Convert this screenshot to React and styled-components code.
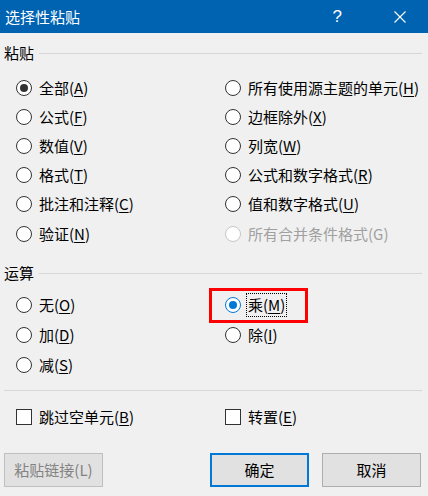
import React from "react";
import styled, { createGlobalStyle } from "styled-components";

const GlobalStyle = createGlobalStyle`
  body {
    margin: 0;
    background: #f0f0f0;
    font-family: "Noto Sans CJK SC", "Noto Sans", sans-serif;
  }
`;

const pasteOptions = [
  { label: "全部", key: "A", checked: true },
  { label: "所有使用源主题的单元", key: "H" },
  { label: "公式", key: "F" },
  { label: "边框除外", key: "X" },
  { label: "数值", key: "V" },
  { label: "列宽", key: "W" },
  { label: "格式", key: "T" },
  { label: "公式和数字格式", key: "R" },
  { label: "批注和注释", key: "C" },
  { label: "值和数字格式", key: "U" },
  { label: "验证", key: "N" },
  { label: "所有合并条件格式", key: "G", disabled: true },
];

const opOptions = [
  { label: "无", key: "O" },
  { label: "乘", key: "M", focused: true },
  { label: "加", key: "D" },
  { label: "除", key: "I" },
  { label: "减", key: "S" },
];

const Hotkey = ({ label, k, plain }) => (
  <>
    {label}({plain ? k : <u>{k}</u>})
  </>
);

const Option = ({ data }) => {
  const { label, key, checked, disabled, focused } = data;
  return (
    <OptionRow $highlight={focused}>
      <Radio $checked={checked || focused} $blue={focused} $disabled={disabled} />
      <OptionText $disabled={disabled} $focused={focused}>
        <Hotkey label={label} k={key} plain={disabled} />
      </OptionText>
    </OptionRow>
  );
};

const App = () => {
  return (
    <Dialog>
      <GlobalStyle />
      <TitleBar>
        <h1>选择性粘贴</h1>
        <span className="help">?</span>
        <svg className="close" width="12" height="12" viewBox="0 0 12 12">
          <path d="M0.5 0.5L11.5 11.5M11.5 0.5L0.5 11.5" stroke="#fff" strokeWidth="1.1" />
        </svg>
      </TitleBar>

      <GroupHeader $top={10}>
        <span>粘贴</span>
      </GroupHeader>
      <OptionGrid $rowH={29.2} $top={10}>
        {pasteOptions.map((o) => (
          <Option key={o.key} data={o} />
        ))}
      </OptionGrid>

      <GroupHeader $top={15}>
        <span>运算</span>
      </GroupHeader>
      <OptionGrid $rowH={30} $top={6.7}>
        {opOptions.map((o) => (
          <Option key={o.key} data={o} />
        ))}
      </OptionGrid>

      <Separator />

      <CheckRow>
        <OptionRow>
          <Box />
          <OptionText>
            <Hotkey label="跳过空单元" k="B" />
          </OptionText>
        </OptionRow>
        <OptionRow>
          <Box />
          <OptionText>
            <Hotkey label="转置" k="E" />
          </OptionText>
        </OptionRow>
      </CheckRow>

      <ButtonBar>
        <Button disabled>粘贴链接(L)</Button>
        <span className="spacer" />
        <Button $primary>确定</Button>
        <Button>取消</Button>
      </ButtonBar>
    </Dialog>
  );
};

const Dialog = styled.div`
  width: 428px;
  height: 496px;
  background: #f0f0f0;
  color: #000;
  font-size: 15px;
  overflow: hidden;
`;

const TitleBar = styled.div`
  height: 33px;
  background: #0063b1;
  color: #fff;
  display: flex;
  align-items: center;
  padding-left: 5px;

  h1 {
    margin: 0;
    font-size: 15px;
    font-weight: 400;
    flex: 1;
    line-height: 1;
  }

  .help {
    font-family: "Liberation Sans", sans-serif;
    font-size: 17px;
    margin-right: 52px;
  }

  .close {
    margin-right: 22px;
  }
`;

const GroupHeader = styled.div`
  display: flex;
  align-items: center;
  height: 20px;
  margin: ${(p) => p.$top}px 6px 0 4px;

  span {
    line-height: 20px;
  }

  &::after {
    content: "";
    flex: 1;
    height: 1px;
    margin-left: 5px;
    margin-top: 1px;
    background: #d7d7d7;
  }
`;

const OptionGrid = styled.div`
  display: grid;
  grid-template-columns: 209px 1fr;
  grid-auto-rows: ${(p) => p.$rowH}px;
  margin-top: ${(p) => p.$top}px;
  padding-left: 16px;
`;

const OptionRow = styled.div`
  position: relative;
  display: flex;
  align-items: center;
  gap: 5px;
  white-space: nowrap;

  ${(p) =>
    p.$highlight &&
    `
    &::after {
      content: "";
      position: absolute;
      left: -16px;
      top: -2px;
      width: 93px;
      height: 29px;
      border: 3px solid #f00;
    }
  `}
`;

const Radio = styled.span`
  box-sizing: border-box;
  width: 16px;
  height: 16px;
  border-radius: 50%;
  border: 1px solid ${(p) => (p.$disabled ? "#c6c6c6" : p.$blue ? "#0078d7" : "#333")};
  background: #fff;
  flex: none;
  display: flex;
  align-items: center;
  justify-content: center;

  &::before {
    content: "";
    display: ${(p) => (p.$checked ? "block" : "none")};
    width: 8px;
    height: 8px;
    border-radius: 50%;
    background: ${(p) => (p.$blue ? "#0078d7" : "#333")};
  }
`;

const OptionText = styled.span`
  color: ${(p) => (p.$disabled ? "#a0a0a0" : "#000")};
  line-height: 20px;
  padding: 1px 1px;
  border: 1px ${(p) => (p.$focused ? "dotted #000" : "solid transparent")};

  u {
    text-underline-offset: 2px;
  }
`;

const Separator = styled.div`
  height: 1px;
  background: #d7d7d7;
  margin: 10px 6px 0 4px;
`;

const CheckRow = styled.div`
  display: grid;
  grid-template-columns: 209px 1fr;
  height: 20px;
  margin-top: 14px;
  padding-left: 16px;
`;

const Box = styled.span`
  box-sizing: border-box;
  width: 16px;
  height: 16px;
  border: 1px solid #333;
  background: #fff;
  flex: none;
`;

const ButtonBar = styled.div`
  display: flex;
  gap: 13px;
  margin-top: 28px;
  padding: 0 7px 0 4px;

  .spacer {
    flex: 1;
  }
`;

const Button = styled.button`
  box-sizing: border-box;
  width: 99px;
  height: 34px;
  font-family: inherit;
  font-size: 15px;
  background: #e1e1e1;
  color: #000;
  border: ${(p) => (p.$primary ? "2px solid #0078d7" : "1px solid #adadad")};
  padding: 0;

  &:disabled {
    color: #838383;
    border-color: #bfbfbf;
    background: #e1e1e1;
  }
`;

export default App;
